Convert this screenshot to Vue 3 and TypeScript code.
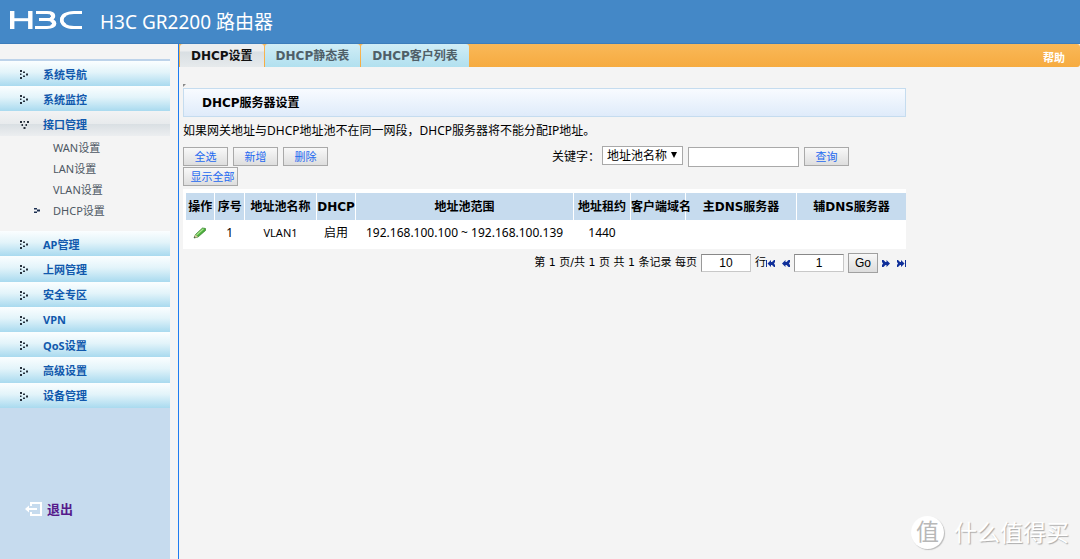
<script setup lang="ts">
import { ref } from 'vue'

const topMenu = ['系统导航', '系统监控']
const subMenu = ['WAN设置', 'LAN设置', 'VLAN设置', 'DHCP设置']
const bottomMenu = ['AP管理', '上网管理', '安全专区', 'VPN', 'QoS设置', '高级设置', '设备管理']
const tabs = ['DHCP设置', 'DHCP静态表', 'DHCP客户列表']
const columns = [
  { title: '操作', name: 'op' },
  { title: '序号', name: 'no' },
  { title: '地址池名称', name: 'pool' },
  { title: 'DHCP', name: 'state' },
  { title: '地址池范围', name: 'range' },
  { title: '地址租约', name: 'lease' },
  { title: '客户端域名', name: 'domain' },
  { title: '主DNS服务器', name: 'dns1' },
  { title: '辅DNS服务器', name: 'dns2' },
]
const keyword = ref('')
const pageSize = ref('10')
const page = ref('1')
</script>

<template>
  <div class="page">
    <header class="header">
      <svg class="logo" viewBox="0 0 74 20" role="img" aria-label="H3C" fill="none" stroke="#fff">
        <path d="M3.200 1V19M21.300 1V19" stroke-width="4.400" />
        <path d="M2 9.700H22" stroke-width="3" />
        <path d="M27 2.500H38C47 2.500 47 9.500 38 9.500H30M38 9.500C48.500 9.500 48.500 17.500 38 17.500H26" stroke-width="3" />
        <path d="M41.500 3.500C44.500 5 44 7.500 41.500 8.800M42 10.500C45.500 12 45.500 15 42 16.500" stroke-width="3" />
        <path d="M73 2.500H65C48.500 2.500 48.500 17.500 65 17.500H73" stroke-width="3" />
        <path d="M56.500 4.500C51.500 7 51.500 13 56.500 15.500" stroke-width="3.500" />
      </svg>
      <h1>H3C GR2200 路由器</h1>
    </header>

    <div class="body">
      <nav class="sidebar">
        <ul class="menu top">
          <li v-for="item in topMenu" :key="item">
            <a href="#">
              <svg class="dots" viewBox="0 0 8 9"><path d="M0 0h2v2H0zM3 1.500h2v1.500H3zM0 3.500h1.500v1.500H0zM6 3.500h2v2H6zM3 5.500h2V7H3zM0 7h2v2H0z" /></svg>
              {{ item }}
            </a>
          </li>
          <li>
            <a href="#" class="open">
              <svg class="dots wide" viewBox="0 0 9 8"><path d="M0 0h2v2H0zM3.500 0h1.500v1.500H3.500zM7 0h2v2H7zM1.500 3h1.500v2H1.500zM5.500 3h1.500v2H5.500zM3.500 6h2v2h-2z" /></svg>
              接口管理
            </a>
          </li>
        </ul>
        <ul class="submenu">
          <li v-for="item in subMenu" :key="item">
            <a href="#">
              <svg v-if="item === 'DHCP设置'" class="marker" viewBox="0 0 6 5"><path d="M0 0h3v1.500H0zM3 1.500h3v2H3zM0 3.500h3V5H0z" /></svg>
              {{ item }}
            </a>
          </li>
        </ul>
        <ul class="menu bottom">
          <li v-for="item in bottomMenu" :key="item">
            <a href="#">
              <svg class="dots" viewBox="0 0 8 9"><path d="M0 0h2v2H0zM3 1.500h2v1.500H3zM0 3.500h1.500v1.500H0zM6 3.500h2v2H6zM3 5.500h2V7H3zM0 7h2v2H0z" /></svg>
              {{ item }}
            </a>
          </li>
        </ul>
        <a href="#" class="logout">
          <svg viewBox="0 0 18 14" fill="none" stroke="#fff" stroke-width="2"><path d="M6 4V1H16V13H6V10" /><path d="M3 7H12" /><path d="M0 7L4 3.500V10.500Z" fill="#fff" stroke="none" /></svg>
          <span>退出</span>
        </a>
      </nav>

      <main class="main">
        <div class="tabbar">
          <a v-for="(tab, i) in tabs" :key="tab" href="#" class="tab" :class="{ active: i === 0 }">{{ tab }}</a>
          <a href="#" class="help">帮助</a>
        </div>

        <div class="content">
          <svg class="corner" viewBox="0 0 3 3"><path d="M0 0H3L0 3Z" fill="#888" /></svg>
          <h2>DHCP服务器设置</h2>
          <p class="note">如果网关地址与DHCP地址池不在同一网段，DHCP服务器将不能分配IP地址。</p>

          <form class="tools" @submit.prevent>
            <div class="actions">
              <button type="button">全选</button>
              <button type="button">新增</button>
              <button type="button">删除</button>
              <button type="button" class="all">显示全部</button>
            </div>
            <div class="search">
              <label for="field">关键字：</label>
              <div class="select">
                <select id="field"><option>地址池名称</option></select>
                <svg viewBox="0 0 6 6"><path d="M0 0H6L3 6Z" /></svg>
              </div>
              <input v-model="keyword" type="text" aria-label="关键字" />
              <button type="submit">查询</button>
            </div>
          </form>

          <div class="grid">
            <table>
              <colgroup><col v-for="c in columns" :key="c.name" :class="c.name" /></colgroup>
              <thead>
                <tr><th v-for="c in columns" :key="c.name" scope="col">{{ c.title }}</th></tr>
              </thead>
              <tbody>
                <tr>
                  <td>
                    <button type="button" class="edit" aria-label="编辑">
                      <svg viewBox="0 0 14 12"><path d="M1 11L2.500 7.500L9.500 1L12.500 1.500L12.500 3.500L5 10Z" fill="#4caf3c" stroke="#2f7d28" stroke-width=".7" /><path d="M3.500 8L10.500 1.800" stroke="#a9e58e" stroke-width="1.200" /><path d="M1 11L2.500 7.500L5 10Z" fill="#d9c9a0" /><path d="M1 11L1.600 9.500L2.600 10.500Z" fill="#333" /></svg>
                    </button>
                  </td>
                  <td>1</td>
                  <td class="name">VLAN1</td>
                  <td>启用</td>
                  <td>192.168.100.100 ~ 192.168.100.139</td>
                  <td>1440</td>
                  <td></td>
                  <td></td>
                  <td></td>
                </tr>
              </tbody>
            </table>
          </div>

          <form class="pager" @submit.prevent>
            <label for="size">第 1 页/共 1 页 共 1 条记录 每页</label>
            <input id="size" v-model="pageSize" type="text" />
            <span>行</span>
            <button type="button" class="arrow first" aria-label="首页"><svg viewBox="0 0 10 7"><path d="M0 0h1v7H0zM1.500 3.500L5 0V2L6 2L8 0H9V2L8 3.500L9 5V7H8L6 5L5 5V7Z" /></svg></button>
            <button type="button" class="arrow prev" aria-label="上一页"><svg viewBox="0 0 8 7"><path d="M0 3.500L3.500 0V2L4.500 2L6.500 0H8V2L7 3.500L8 5V7H6.500L4.500 5L3.500 5V7Z" /></svg></button>
            <input v-model="page" type="text" aria-label="页码" />
            <button type="submit" class="go">Go</button>
            <button type="button" class="arrow next" aria-label="下一页"><svg viewBox="0 0 8 7"><path d="M8 3.500L4.500 0V2L3.500 2L1.500 0H0V2L1 3.500L0 5V7H1.500L3.500 5L4.500 5V7Z" /></svg></button>
            <button type="button" class="arrow last" aria-label="末页"><svg viewBox="0 0 10 7"><path d="M9 0h1v7H9zM8.500 3.500L5 0V2L4 2L2 0H1V2L2 3.500L1 5V7H2L4 5L5 5V7Z" /></svg></button>
          </form>
        </div>
      </main>
    </div>

    <div class="watermark"><span class="badge">值</span><span>什么值得买</span></div>
  </div>
</template>

<style>
html,
body {
  background: #f4f4f4;
}
</style>

<style scoped>
* {
  box-sizing: border-box;
}
.page {
  position: relative;
  display: flex;
  flex-direction: column;
  min-height: 100vh;
  font: 12px/16px 'Noto Sans', 'Noto Sans CJK SC', sans-serif;
  color: #000;
}
a {
  text-decoration: none;
}
ul,
h1,
h2,
p {
  margin: 0;
  padding: 0;
  list-style: none;
}
button,
input,
select {
  font-family: inherit;
  margin: 0;
}
.header {
  display: flex;
  align-items: center;
  gap: 17px;
  height: 44px;
  padding: 0 9px;
  background: #4488c7;
  border-bottom: 1px solid #3c7dbb;
}
.logo {
  width: 74px;
  height: 20px;
  margin-bottom: 4px;
}
h1 {
  font-size: 19px;
  line-height: 24px;
  font-weight: 400;
  color: #fff;
}
.body {
  flex: 1;
  display: flex;
}
.sidebar {
  width: 170px;
  background: #c6dbee;
}
.top {
  padding-top: 15px;
  background: #f4f4f4;
}
.top li:first-child {
  border-top: 2px solid #bdd3ea;
}
.menu a {
  display: flex;
  align-items: center;
  height: 25px;
  padding: 2px 0 0 20px;
  font-size: 11px;
  font-weight: 700;
  color: #1159ad;
  background: linear-gradient(#fbfeff, #e3f4fa 45%, #a9daef);
}
.menu a.open {
  background: linear-gradient(#f2f3f4, #e8ebed 50%, #d9dfe3 52%, #eceef0);
}
.bottom {
  display: grid;
  grid-auto-rows: 1fr;
  height: 177px;
  background: #f0fafd;
}
.bottom li {
  display: grid;
}
.menu.bottom a {
  height: auto;
}
.dots {
  width: 8px;
  height: 9px;
  margin-right: 15px;
  fill: #26303c;
}
.dots.wide {
  width: 9px;
  height: 8px;
  margin-right: 14px;
}
.submenu {
  padding: 1px 0 10px;
  background: #f4f4f4;
}
.submenu a {
  display: flex;
  align-items: center;
  justify-content: flex-start;
  height: 21px;
  padding-left: 53px;
  font-size: 11px;
  color: #4d5763;
}
.marker {
  width: 6px;
  height: 5px;
  margin: 0 13px 0 -19px;
  fill: #1d3052;
}
.logout {
  display: flex;
  align-items: center;
  gap: 4px;
  margin-top: 93px;
  padding-left: 25px;
  font-size: 13px;
  font-weight: 700;
  color: #551a8b;
}
.logout svg {
  width: 18px;
  height: 14px;
}
.main {
  flex: 1;
  margin-left: 8px;
  border-left: 1px solid #1f7cf0;
}
.tabbar {
  display: flex;
  gap: 1px;
  height: 23px;
  padding-left: 1px;
  background: linear-gradient(#f9b858, #f6ab40);
  border-radius: 0 3px 3px 0;
}
.tab {
  padding: 0 11px;
  font: 700 12px/24px 'DejaVu Sans', 'Noto Sans CJK SC', sans-serif;
  color: #4f5f68;
  background: linear-gradient(#d0edf6, #b1e0ef);
  border-radius: 3px 3px 0 0;
}
.tab.active {
  color: #111;
  background: linear-gradient(#eceeef 30%, #d9dfe3 35%, #e6eaec);
}
.help {
  margin-left: auto;
  padding: 6px 15px 0 0;
  font-size: 11px;
  font-weight: 700;
  color: #fff;
}
.content {
  padding-left: 4px;
  margin-right: 174px;
}
.corner {
  display: block;
  width: 3px;
  height: 3px;
  margin: 17px 0 1px;
}
h2 {
  height: 29px;
  padding-left: 18px;
  border: 1px solid #c5dcef;
  background: linear-gradient(#f8fbff, #dfebfa);
  font: 700 12px/28px 'DejaVu Sans', 'Noto Sans CJK SC', sans-serif;
}
.note {
  padding: 6px 0 7px;
}
.tools {
  display: flex;
  justify-content: space-between;
}
.actions {
  display: flex;
  flex-wrap: wrap;
  align-content: flex-start;
  gap: 1px 5px;
  width: 160px;
  padding-top: 1px;
}
.tools button {
  width: 45px;
  height: 19px;
  padding: 1px 0 0;
  border: 1px solid #a9a9a9;
  background: linear-gradient(#f8f8f8, #dedede);
  font-size: 11px;
  line-height: 16px;
  color: #2469f0;
}
.tools button.all {
  width: 55px;
  padding-left: 4px;
}
.search {
  display: flex;
  align-items: flex-start;
  gap: 5px;
  padding-right: 57px;
}
.search label {
  margin-right: -3px;
  line-height: 22px;
}
.select {
  position: relative;
}
select {
  appearance: none;
  display: block;
  width: 81px;
  height: 19px;
  padding: 0 4px;
  border: 1px solid #a9a9a9;
  border-radius: 0;
  background: #fff;
  color: #000;
  font-size: 12px;
  line-height: 17px;
}
.select svg {
  position: absolute;
  top: 6px;
  right: 6px;
  width: 6px;
  height: 6px;
  pointer-events: none;
}
.search input {
  width: 111px;
  height: 20px;
  margin-top: 1px;
  border: 1px solid #a9a9a9;
  background: #fff;
}
.search button {
  margin-top: 1px;
}
.grid {
  margin-top: 3px;
  background: #fff;
}
table {
  width: calc(100% + 1px);
  table-layout: fixed;
  border-collapse: separate;
  border-spacing: 1px 0;
  padding: 4px 0 0 2px;
}
col.op,
col.no {
  width: 4%;
}
col.pool {
  width: 10%;
}
col.state {
  width: 38px;
}
col.lease {
  width: 56px;
}
col.domain {
  width: 54px;
}
col.dns1 {
  width: 110px;
}
col.dns2 {
  width: 109px;
}
th {
  height: 27px;
  padding: 0;
  background: #c6dbee;
  font: 700 12px/16px 'DejaVu Sans', 'Noto Sans CJK SC', sans-serif;
  white-space: nowrap;
}
td {
  height: 29px;
  padding: 0 0 4px;
  text-align: center;
  white-space: nowrap;
}
td.name {
  font-size: 11px;
}
.edit {
  display: block;
  width: 14px;
  height: 12px;
  margin: 0 auto;
  padding: 0;
  border: 0;
  background: none;
}
.edit svg {
  display: block;
  width: 14px;
  height: 12px;
}
.pager {
  display: flex;
  align-items: center;
  justify-content: flex-end;
  height: 22px;
  margin-top: 3px;
  font: 11px/16px 'DejaVu Sans', 'Noto Sans CJK SC', sans-serif;
}
.pager input {
  width: 50px;
  height: 18px;
  border: 1px solid #c8c8c8;
  border-top-color: #888;
  border-left-color: #999;
  background: #fff;
  font: 12px/16px 'Liberation Sans', sans-serif;
  text-align: center;
}
.pager label {
  margin-right: 4px;
}
.pager span {
  margin-left: 4px;
}
.arrow {
  padding: 0;
  border: 0;
  background: none;
}
.arrow svg {
  display: block;
  width: 8px;
  height: 7px;
  fill: #10309a;
}
.first svg,
.last svg {
  width: 10px;
}
.prev {
  margin: 0 4px 0 6px;
}
.next {
  margin: 0 6px 0 4px;
}
.go {
  width: 30px;
  height: 20px;
  margin-left: 4px;
  padding: 0;
  border: 1px solid #a0a0a0;
  background: linear-gradient(#f8f8f8, #dcdcdc);
  font: 12px/16px 'Liberation Sans', sans-serif;
  color: #000;
}
.watermark {
  position: absolute;
  right: 11px;
  bottom: 10px;
  display: flex;
  align-items: center;
  gap: 10px;
  font-size: 23px;
  line-height: 34px;
  color: #fff;
  text-shadow: 1px 1px 1px #aaa;
}
.badge {
  width: 33px;
  height: 33px;
  border-radius: 50%;
  background: #fff;
  box-shadow: 1px 1px 1px #bbb;
  font-size: 23px;
  line-height: 31px;
  text-align: center;
  color: #b8b8b8;
  text-shadow: none;
}
</style>
